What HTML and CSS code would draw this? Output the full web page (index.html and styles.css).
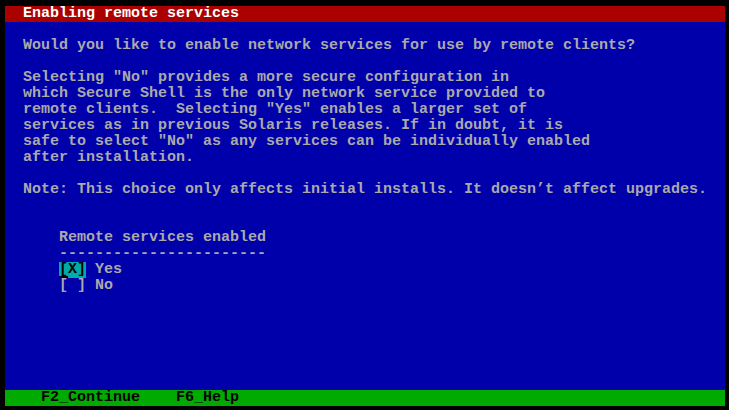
FILE: index.html
```html
<!DOCTYPE html>
<html>
<head>
<meta charset="utf-8">
<link rel="stylesheet" href="styles.css">
</head>
<body>
<div class="screen">
<div class="row title">  Enabling remote services</div>
<div class="main">
<div class="row"> </div>
<div class="row">  Would you like to enable network services for use by remote clients?</div>
<div class="row"> </div>
<div class="row">  Selecting "No" provides a more secure configuration in</div>
<div class="row">  which Secure Shell is the only network service provided to</div>
<div class="row">  remote clients.  Selecting "Yes" enables a larger set of</div>
<div class="row">  services as in previous Solaris releases. If in doubt, it is</div>
<div class="row">  safe to select "No" as any services can be individually enabled</div>
<div class="row">  after installation.</div>
<div class="row"> </div>
<div class="row">  Note: This choice only affects initial installs. It doesn’t affect upgrades.</div>
<div class="row"> </div>
<div class="row"> </div>
<div class="row">      Remote services enabled</div>
<div class="row">      -----------------------</div>
<div class="row">      <span class="sel"><span class="cursor">[</span>X]</span> Yes</div>
<div class="row">      [ ] No</div>
</div>
<div class="row footer">    F2_Continue    F6_Help</div>
</div>
</body>
</html>
```
FILE: styles.css
```css
html, body {
  margin: 0;
  padding: 0;
  background: #000000;
}
.screen {
  width: 720px;
  height: 400px;
  margin: 6px 0 0 5px;
  display: flex;
  flex-direction: column;
  background: #0000aa;
  font-family: "Liberation Mono", "DejaVu Sans Mono", monospace;
  font-weight: bold;
  font-size: 15px;
  color: #aaaaaa;
}
.main {
  flex: 1;
}
.row {
  height: 16px;
  line-height: 16px;
  white-space: pre;
  overflow: hidden;
}
.title {
  background: #aa0000;
  color: #ffffff;
}
.footer {
  background: #00aa00;
  color: #000000;
}
.sel {
  background: #00aaaa;
  color: #000000;
}
.cursor {
  display: inline-block;
  height: 16px;
  background: linear-gradient(to bottom, transparent 14px, #000000 14px, #000000 16px, transparent 16px);
}
```
